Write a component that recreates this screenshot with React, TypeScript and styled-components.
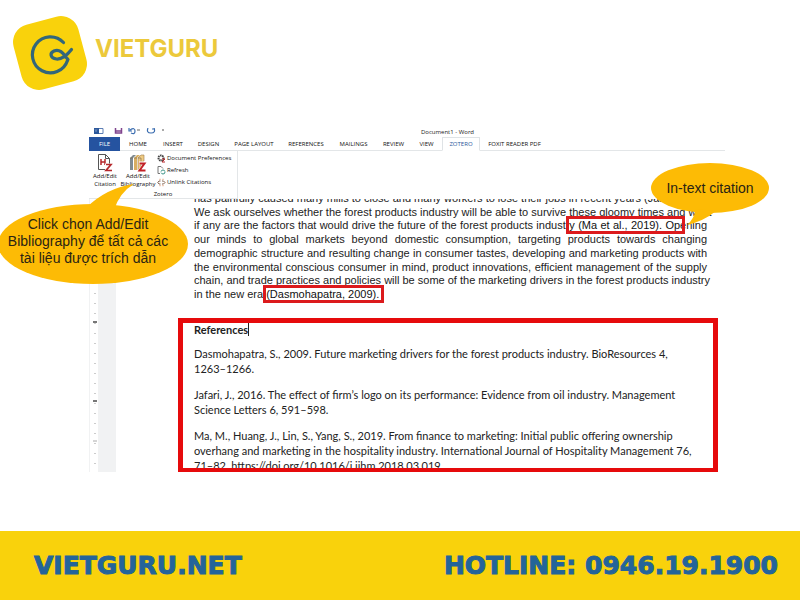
import React from "react";
import styled, { createGlobalStyle } from "styled-components";

const Global = createGlobalStyle`
  *, *::before, *::after { box-sizing: border-box; }
  body { margin: 0; background: #fff; color: #222; font-family: "Liberation Sans", Arial, sans-serif; }
  p, h1, h2, figure { margin: 0; }
`;

const Page = styled.div`
  min-height: 100vh;
  display: flex;
  flex-direction: column;
  overflow: hidden;
`;

const Header = styled.header`
  display: flex;
  align-items: center;
  gap: 7px;
  padding: 15px 12px 37px;
`;

const Brand = styled.h1`
  font: 700 24px/24px "Inter", sans-serif;
  color: #ecc93b;
  margin-bottom: 8px;
`;

const Main = styled.main`
  flex: 1;
  padding: 0 75px 59px 89px;
`;

const Figure = styled.figure`
  position: relative;
`;

const WordWindow = styled.div`
  overflow: hidden;
  display: flex;
  flex-direction: column;
`;

const TitleBar = styled.div`
  height: 9px;
  display: flex;
  align-items: center;
  justify-content: space-between;
  font: 6px/9px "Open Sans", sans-serif;
  color: #222;
  padding-left: 5px;
`;

const DocTitle = styled.span`
  flex: 0 0 304px;
`;

const Tabs = styled.nav`
  display: grid;
  grid-template-columns: 31px 36px 34px 37px 54px 50px 45px 35px 31px 38px 69px;
  height: 14px;
  border-bottom: 1px solid #e3e6e8;
`;

const Tab = styled.button<{ $kind?: "file" | "active" }>`
  height: 14px;
  padding: 0;
  border: 1px solid ${(p) => (p.$kind === "active" ? "#dfe3e6" : "transparent")};
  border-bottom-color: ${(p) => (p.$kind === "active" ? "#fff" : "transparent")};
  background: ${(p) => (p.$kind === "file" ? "#2553a0" : "transparent")};
  background-clip: border-box;
  color: ${(p) => (p.$kind === "file" ? "#fff" : p.$kind === "active" ? "#2b579a" : "#111")};
  font: 6px/12px "Open Sans", sans-serif;
  white-space: nowrap;
  text-align: center;
`;

const Ribbon = styled.div`
  width: 149px;
  height: 48px;
  border-right: 1px solid #e3e6e8;
  border-bottom: 1px solid #e3e6e8;
  display: grid;
  grid-template-columns: 32px 34px 1fr;
  grid-template-rows: 39px 8px;
  font: 6px/8px "Open Sans", sans-serif;
  color: #111;
`;

const BigTool = styled.button`
  padding: 3px 0 0;
  border: 0;
  background: none;
  font: inherit;
  color: inherit;
  white-space: nowrap;
  display: flex;
  flex-direction: column;
  align-items: center;
`;

const ToolList = styled.div`
  display: flex;
  flex-direction: column;
  padding: 1px 0 0 2px;
`;

const SmallTool = styled.button`
  height: 12px;
  padding: 0;
  border: 0;
  background: none;
  font: 6px/12px "Open Sans", sans-serif;
  color: inherit;
  white-space: nowrap;
  display: flex;
  align-items: center;
  gap: 1px;
`;

const GroupName = styled.span`
  grid-column: 1 / -1;
  text-align: center;
`;

const Workspace = styled.div`
  height: 273px;
  overflow: hidden;
  display: flex;
`;

const Ruler = styled.div`
  flex: 0 0 27px;
  border-left: 1px solid #f1f2f3;
  background: linear-gradient(to right, #fff 8px, #f1f2f3 8px);
`;

const Sheet = styled.article`
  flex: 1;
  min-width: 0;
  padding: 0 7px 0 62px;
`;

const Body = styled.div`
  height: 109px;
  margin: -7px 11px 0 16px;
  display: flex;
  flex-direction: column;
  justify-content: space-between;
  font-size: 11px;
  line-height: 13px;
`;

const Line = styled.p<{ $last?: boolean }>`
  text-align: justify;
  text-align-last: ${(p) => (p.$last ? "left" : "justify")};
  white-space: nowrap;
`;

const Mark = styled.mark`
  background: none;
  color: #111;
  outline: 3px solid #dc1a1c;
  padding-right: 2px;
  margin-right: -2px;
`;

const References = styled.section`
  margin-top: 17px;
  height: 154px;
  overflow: hidden;
  border: 5px solid #e60a0c;
  border-bottom-width: 4px;
  padding: 0 8px 0 11px;
  font: 11px/15px "Lato", sans-serif;
  color: #222;
`;

const RefTitle = styled.h2`
  width: fit-content;
  margin-bottom: 10px;
  font: 700 11px/13px "Lato", sans-serif;
  border-right: 1px solid #222;
`;

const Ref = styled.p`
  margin-bottom: 11px;
  white-space: nowrap;
`;

const Callout = styled.figcaption<{ $side: "left" | "right" }>`
  position: absolute;
  ${(p) => (p.$side === "left" ? "left: -91px; top: 54px; width: 192px;" : "right: -45px; top: 33px; width: 120px;")}
  color: #2a2413;
  font-size: 14px;
  line-height: 17px;
  text-align: center;
  svg { display: block; width: 100%; }
`;

const CalloutText = styled.p<{ $top: number; $right: number }>`
  position: absolute;
  inset: ${(p) => p.$top}px ${(p) => p.$right}px auto 0;
  white-space: nowrap;
`;

const Footer = styled.footer`
  height: 69px;
  background: #f9d20c;
  display: flex;
  align-items: center;
  justify-content: space-between;
  padding: 0 22px 0 34px;
  font: 700 25px/30px "DejaVu Sans", sans-serif;
  color: #24649a;
  -webkit-text-stroke: 1px #24649a;
`;

const FootLink = styled.a`
  color: inherit;
  text-decoration: none;
`;

const Logo = () => (
  <svg width="76" height="76" viewBox="12 15 76 76" aria-hidden="true">
    <rect x="16.5" y="19.5" width="67" height="67" rx="18" fill="#f9d20c" transform="rotate(-15 50 53)" />
    <g fill="none" stroke="#33677a" strokeWidth="3.2" strokeLinecap="round">
      <path d="M63.5 42.500A18 18 0 1 0 67.500 60.500" />
      <path d="M71.500 49.500C68 54 62 59.500 56.500 59C50 58 49.500 53 54 51C59 49 63 53 65 56L68 59.500" />
    </g>
  </svg>
);

const QuickIcons = () => (
  <svg width="78" height="9" viewBox="0 0 78 9" fill="none" aria-hidden="true">
    <path d="M0 0h5v6H0z" fill="#2b579a" />
    <path d="M5 .5h4v5H5M1 1l1 3 1-3" stroke="#5c7eb5" />
    <path d="M21.500 0v5h6V0M22 3h5" stroke="#80448e" strokeWidth="1.500" />
    <path d="M36 2q5-3 5 1t-4 2M35 0v3h3" stroke="#3b6db0" strokeWidth="1.200" />
    <path d="M43 2h3" stroke="#666" />
    <path d="M54 0q-2 5 3 5t3-5M58 1h3" stroke="#3b6db0" strokeWidth="1.200" />
    <path d="M68 2h2" stroke="#555" />
  </svg>
);

const CitationIcon = () => (
  <svg width="18" height="18" viewBox="0 0 18 18" fill="none" aria-hidden="true">
    <path d="M2.500 .5h7l4 4v11h-11z" fill="#fff" stroke="#555" />
    <path d="M9.500 .5v4h4" stroke="#555" />
    <path d="M5 5v6M9 5v6M5 8h4" stroke="#b5272b" strokeWidth="1.500" />
    <path d="M9 9.500h8v8H9z" fill="#fff" />
    <path d="M10 10.500h5l-5 6h6" stroke="#b5272b" strokeWidth="1.700" />
  </svg>
);

const BibliographyIcon = () => (
  <svg width="18" height="18" viewBox="0 0 18 18" fill="none" aria-hidden="true">
    <path d="M1 4l3-3h3L4 4v12H1z" fill="#7f8b91" />
    <path d="M5 4l3-3h3L8 4v12H5z" fill="#d8ae62" />
    <path d="M9 4l3-3h3v6l-3 2v7H9z" fill="#efcb83" stroke="#9b7a49" strokeWidth=".6" />
    <path d="M1 4h3M5 4h3M9 4h3v5" stroke="#75654a" strokeWidth=".6" />
    <path d="M10 9h6.500l-6 7.500H17" stroke="#fff" strokeWidth="3" />
    <path d="M10.500 9.500h5l-5 7h6" stroke="#c22126" strokeWidth="2" />
  </svg>
);

const SmallIcon = ({ kind }: { kind: "gear" | "refresh" | "unlink" }) => (
  <svg width="9" height="9" viewBox="0 0 9 9" fill="none" aria-hidden="true">
    {kind === "gear" && (
      <>
        <circle cx="4" cy="4" r="2.500" stroke="#444" strokeWidth="2" strokeDasharray="1.500 .6" />
        <path d="M5 5h3L5 8h3" stroke="#b5272b" />
      </>
    )}
    {kind === "refresh" && (
      <>
        <path d="M1 .5h3l2 2M1 .5v7h2" stroke="#777" />
        <circle cx="6" cy="6" r="2" stroke="#3c9487" strokeDasharray="5 1" />
      </>
    )}
    {kind === "unlink" && (
      <>
        <path d="M3.500 3H2L.8 4.500 2 6h1.500M5 3h1.500L8 4.500 6.500 6H5" stroke="#80614c" />
        <path d="M3 .8v1M6 .8v1M3 7.200v1M6 7.200v1" stroke="#d88454" />
      </>
    )}
  </svg>
);

const RulerMarks = () => (
  <svg width="8" height="273" viewBox="0 0 8 273" fill="none" aria-hidden="true">
    <path d="M5 94v178" stroke="#ccc" strokeDasharray="1 9" strokeWidth="2" />
    <path d="M3 123h4M3 202h4" stroke="#777" strokeWidth="2" />
    <path d="M3 242h4" stroke="#aaa" />
  </svg>
);

const TABS: { label: string; kind?: "file" | "active" }[] = [
  { label: "FILE", kind: "file" },
  { label: "HOME" },
  { label: "INSERT" },
  { label: "DESIGN" },
  { label: "PAGE LAYOUT" },
  { label: "REFERENCES" },
  { label: "MAILINGS" },
  { label: "REVIEW" },
  { label: "VIEW" },
  { label: "ZOTERO", kind: "active" },
  { label: "FOXIT READER PDF" },
];

export default function App() {
  return (
    <Page>
      <Global />
      <Header>
        <Logo />
        <Brand>VIETGURU</Brand>
      </Header>
      <Main>
        <Figure>
          <WordWindow>
            <TitleBar>
              <QuickIcons />
              <DocTitle>Document1 - Word</DocTitle>
            </TitleBar>
            <Tabs>
              {TABS.map((t) => (
                <Tab key={t.label} $kind={t.kind}>{t.label}</Tab>
              ))}
            </Tabs>
            <Ribbon>
              <BigTool><CitationIcon /><span>Add/Edit<br />Citation</span></BigTool>
              <BigTool><BibliographyIcon /><span>Add/Edit<br />Bibliography</span></BigTool>
              <ToolList>
                <SmallTool><SmallIcon kind="gear" />Document Preferences</SmallTool>
                <SmallTool><SmallIcon kind="refresh" />Refresh</SmallTool>
                <SmallTool><SmallIcon kind="unlink" />Unlink Citations</SmallTool>
              </ToolList>
              <GroupName>Zotero</GroupName>
            </Ribbon>
            <Workspace>
              <Ruler><RulerMarks /></Ruler>
              <Sheet>
                <Body>
                  <Line>has painfully caused many mills to close and many workers to lose their jobs in recent years (Jafari, 2016).</Line>
                  <Line>We ask ourselves whether the forest products industry will be able to survive these gloomy times and what</Line>
                  <Line>if any are the factors that would drive the future of the forest products industr<Mark>y (Ma et al., 2019). Op</Mark>ening</Line>
                  <Line>our minds to global markets beyond domestic consumption, targeting products towards changing</Line>
                  <Line>demographic structure and resulting change in consumer tastes, developing and marketing products with</Line>
                  <Line>the environmental conscious consumer in mind, product innovations, efficient management of the supply</Line>
                  <Line>chain, and trade practices and policies will be some of the marketing drivers in the forest products industry</Line>
                  <Line $last>in the new era <Mark>(Dasmohapatra, 2009).</Mark></Line>
                </Body>
                <References>
                  <RefTitle>References</RefTitle>
                  <Ref>Dasmohapatra, S., 2009. Future marketing drivers for the forest products industry. BioResources 4,<br />1263–1266.</Ref>
                  <Ref>Jafari, J., 2016. The effect of firm’s logo on its performance: Evidence from oil industry. Management<br />Science Letters 6, 591–598.</Ref>
                  <Ref>Ma, M., Huang, J., Lin, S., Yang, S., 2019. From finance to marketing: Initial public offering ownership<br />overhang and marketing in the hospitality industry. International Journal of Hospitality Management 76,<br />71–82. https://doi.org/10.1016/j.ijhm.2018.03.019</Ref>
                </References>
              </Sheet>
            </Workspace>
          </WordWindow>
          <Callout $side="left">
            <svg viewBox="0 0 192 104" fill="#fdbb05" aria-hidden="true">
              <ellipse cx="95" cy="62" rx="95" ry="40" />
              <path d="M88 26Q108 6 136 2Q122 10 116 28z" />
            </svg>
            <CalloutText $top={34} $right={12}>Click chọn Add/Edit<br />Bibliography để tất cả các<br />tài liệu được trích dẫn</CalloutText>
          </Callout>
          <Callout $side="right">
            <svg viewBox="0 0 120 66" fill="#fdbb05" aria-hidden="true">
              <ellipse cx="60" cy="27" rx="59" ry="25" />
              <path d="M46 48Q44 58 37 64Q54 60 66 50z" />
            </svg>
            <CalloutText $top={19} $right={0}>In-text citation</CalloutText>
          </Callout>
        </Figure>
      </Main>
      <Footer>
        <FootLink href="#site">VIETGURU.NET</FootLink>
        <FootLink href="tel:0946191900">HOTLINE: 0946.19.1900</FootLink>
      </Footer>
    </Page>
  );
}
